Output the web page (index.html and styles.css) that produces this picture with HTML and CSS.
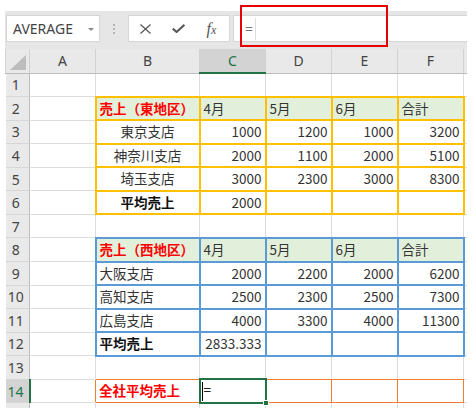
FILE: index.html
```html
<!DOCTYPE html>
<html lang="ja">
<head>
    <meta charset="UTF-8">
    <title>売上集計</title>
    <link rel="stylesheet" href="styles.css">
</head>
<body>
    <div class="excel">
        <!-- Formula bar -->
        <div class="toolbar">
            <div class="namebox"><span>AVERAGE</span><span class="caret"></span></div>
            <div class="grip"><i></i><i></i><i></i></div>
            <div class="fxbox">
                <span class="slot">
                    <svg width="11" height="10" viewBox="0 0 11 10"><path d="M0.5 0.5 L10.5 9.5 M10.5 0.5 L0.5 9.5" stroke="#5a5a5a" stroke-width="1.3" fill="none"/></svg>
                </span>
                <span class="slot">
                    <svg width="13" height="9" viewBox="0 0 13 9"><path d="M0.8 4.6 L4.6 8 L12.4 0.8" stroke="#5a5a5a" stroke-width="2.1" fill="none"/></svg>
                </span>
                <span class="slot fx">f<small>x</small></span>
            </div>
            <div class="formula"><span class="eq">=</span><span class="caretline"></span></div>
        </div>

        <!-- Annotation -->
        <div class="callout"></div>

        <!-- Sheet -->
        <div class="grid-wrap">
            <table class="sheet">
                <colgroup>
                    <col class="w-rh"><col class="w-a"><col class="w-b"><col class="w-n"><col class="w-n"><col class="w-n"><col class="w-n"><col class="w-g">
                </colgroup>
                <thead>
                    <tr>
                        <th class="corner"><span class="tri"></span></th>
                        <th>A</th><th>B</th><th class="sel">C</th><th>D</th><th>E</th><th>F</th><th></th>
                    </tr>
                </thead>
                <tbody>
                    <tr><th>1</th><td></td><td></td><td></td><td></td><td></td><td></td><td></td></tr>
                    <tr><th>2</th><td></td>
                        <td class="east head red">売上（東地区）</td><td class="east head">4月</td><td class="east head">5月</td><td class="east head">6月</td><td class="east head">合計</td><td></td></tr>
                    <tr><th>3</th><td></td>
                        <td class="east mid">東京支店</td><td class="east num">1000</td><td class="east num">1200</td><td class="east num">1000</td><td class="east num">3200</td><td></td></tr>
                    <tr><th>4</th><td></td>
                        <td class="east mid">神奈川支店</td><td class="east num">2000</td><td class="east num">1100</td><td class="east num">2000</td><td class="east num">5100</td><td></td></tr>
                    <tr><th>5</th><td></td>
                        <td class="east mid">埼玉支店</td><td class="east num">3000</td><td class="east num">2300</td><td class="east num">3000</td><td class="east num">8300</td><td></td></tr>
                    <tr><th>6</th><td></td>
                        <td class="east mid bold">平均売上</td><td class="east num">2000</td><td class="east"></td><td class="east"></td><td class="east"></td><td></td></tr>
                    <tr><th>7</th><td></td><td></td><td></td><td></td><td></td><td></td><td></td></tr>
                    <tr><th>8</th><td></td>
                        <td class="west head red">売上（西地区）</td><td class="west head">4月</td><td class="west head">5月</td><td class="west head">6月</td><td class="west head">合計</td><td></td></tr>
                    <tr><th>9</th><td></td>
                        <td class="west">大阪支店</td><td class="west num">2000</td><td class="west num">2200</td><td class="west num">2000</td><td class="west num">6200</td><td></td></tr>
                    <tr><th>10</th><td></td>
                        <td class="west">高知支店</td><td class="west num">2500</td><td class="west num">2300</td><td class="west num">2500</td><td class="west num">7300</td><td></td></tr>
                    <tr><th>11</th><td></td>
                        <td class="west">広島支店</td><td class="west num">4000</td><td class="west num">3300</td><td class="west num">4000</td><td class="west num">11300</td><td></td></tr>
                    <tr><th>12</th><td></td>
                        <td class="west bold">平均売上</td><td class="west num">2833.333</td><td class="west"></td><td class="west"></td><td class="west"></td><td></td></tr>
                    <tr><th>13</th><td></td>
                        <td class="above"></td><td class="above"></td><td class="above"></td><td class="above"></td><td class="above"></td><td></td></tr>
                    <tr class="cur"><th>14</th><td class="before"></td>
                        <td class="total red">全社平均売上</td>
                        <td class="active"><span class="ibeam"></span>=<span class="handle"></span></td>
                        <td class="total"></td><td class="total"></td><td class="total"></td><td class="after"></td></tr>
                    <tr><th></th><td></td><td></td><td></td><td></td><td></td><td></td><td></td></tr>
                </tbody>
            </table>
        </div>
    </div>
</body>
</html>
```

FILE: styles.css
```css
* {
    box-sizing: border-box;
}

body {
    margin: 0;
    background: #fff;
    font-family: "Noto Sans", Arial, sans-serif;
}

.excel {
    position: relative;
    width: 462px;
    margin: 11px 0 0 5px;
}

/* Formula bar */
.toolbar {
    display: flex;
    align-items: flex-start;
    height: 38px;
    padding-top: 4px;
    background: #e6e6e6;
}

.namebox {
    display: flex;
    align-items: center;
    width: 94px;
    height: 27px;
    margin-left: 1px;
    padding: 0 5px 0 6px;
    background: #fff;
    border: 1px solid #d6d6d6;
    font-size: 14px;
    color: #444;
}

.namebox .caret {
    margin-left: auto;
    margin-top: 2px;
    border-left: 3px solid transparent;
    border-right: 3px solid transparent;
    border-top: 3px solid #8a8a8a;
}

.grip {
    display: flex;
    flex-direction: column;
    align-items: center;
    justify-content: center;
    gap: 2px;
    width: 28px;
    height: 27px;
}

.grip i {
    width: 2px;
    height: 2px;
    background: #b4b4b4;
}

.fxbox {
    display: flex;
    align-items: center;
    width: 102px;
    height: 27px;
    background: #fff;
    border: 1px solid #d6d6d6;
}

.fxbox .slot {
    display: flex;
    justify-content: center;
    align-items: center;
    width: 33px;
}

.fx {
    font-family: "Liberation Serif", serif;
    font-style: italic;
    font-size: 16px;
    color: #555;
}

.fx small {
    font-size: 12px;
    margin-top: 3px;
}

.formula {
    display: flex;
    align-items: center;
    flex: 1;
    height: 27px;
    margin-left: 3px;
    padding-left: 11px;
    background: #fff;
    border: 1px solid #d6d6d6;
    border-right: none;
}

.formula .eq {
    font-size: 14px;
    color: #777;
}

.formula .caretline {
    width: 1px;
    height: 22px;
    margin-left: 2px;
    background: #ddd;
}

/* Red annotation box */
.callout {
    position: absolute;
    left: 235px;
    top: -6px;
    width: 148px;
    height: 42px;
    border: 2px solid #e60000;
}

/* Sheet */
.grid-wrap {
    height: 359px;
    overflow: hidden;
}

.sheet {
    width: 462px;
    border-collapse: collapse;
    table-layout: fixed;
    font-family: "Noto Sans CJK JP", sans-serif;
    font-size: 13.5px;
    color: #333;
}

.w-rh { width: 24px; }
.w-a { width: 66px; }
.w-b { width: 104px; }
.w-n { width: 66px; }
.w-g { width: 4px; }

.sheet thead th {
    height: 24px;
    padding: 0;
    background: #e9e9e9;
    border: 1px solid #d2d2d2;
    border-top: none;
    border-bottom: 1px solid #bcbcbc;
    font-family: "Noto Sans", sans-serif;
    font-weight: normal;
    font-size: 14px;
    color: #444;
}

.sheet thead th.sel {
    background: #d3d3d3;
    color: #217346;
    border-bottom: 2px solid #217346;
}

.corner {
    position: relative;
}

.corner .tri {
    position: absolute;
    right: 3px;
    bottom: 3px;
    border-left: 16px solid transparent;
    border-bottom: 15px solid #bdbdbd;
}

.sheet tbody tr {
    height: 23.57px;
}

.sheet tbody th {
    padding: 0 3px 0 0;
    background: #e9e9e9;
    border: 1px solid #d6d6d6;
    border-left: none;
    border-right: 1px solid #bcbcbc;
    font-family: "Noto Sans", sans-serif;
    font-weight: normal;
    font-size: 14px;
    color: #444;
}

.sheet tbody tr.cur th {
    background: #d3d3d3;
    color: #217346;
    border-right: 2px solid #217346;
}

.sheet td {
    padding: 0 3px;
    border: 1px solid #dcdcdc;
    white-space: nowrap;
    line-height: 1;
}

.sheet td:last-child {
    padding: 0;
    border-right: none;
}

/* Cell formats */
.num { text-align: right; }
.mid { text-align: center; }
.bold { font-weight: bold; color: #111; }
.red { font-weight: bold; color: #ff0000; }
.head { background: #e2efda; }

.east { border: 2px solid #ffc000 !important; }
.west { border: 2px solid #5b9bd5 !important; }

.total { border: 1px solid #ed7d31 !important; }
.above { border-bottom-color: #ed7d31 !important; }
.before { border-right-color: #ed7d31 !important; }
.after { border-left-color: #ed7d31 !important; }

.active {
    position: relative;
    border: 2px solid #217346 !important;
    color: #222;
}

.ibeam {
    display: inline-block;
    width: 1px;
    height: 19px;
    margin-left: -2px;
    margin-right: 1px;
    vertical-align: middle;
    background: #000;
}

.handle {
    position: absolute;
    right: -4px;
    bottom: -4px;
    width: 6px;
    height: 6px;
    background: #217346;
    border: 1px solid #fff;
}
```
